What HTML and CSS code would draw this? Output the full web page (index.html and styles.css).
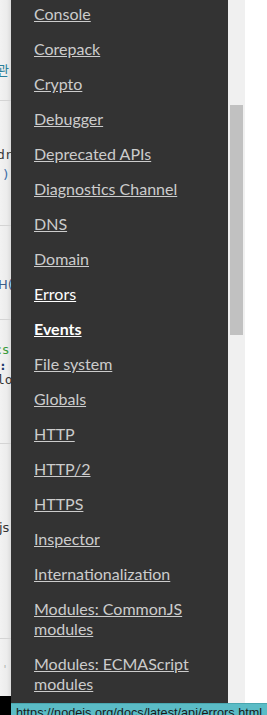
FILE: index.html
```html
<!DOCTYPE html>
<html lang="en">
<head>
<meta charset="utf-8">
<title>Node.js Docs</title>
<link rel="stylesheet" href="styles.css">
</head>
<body>
<div class="frame">
  <div class="page">
    <div class="sec s1"><span class="frag t1">관</span></div>
    <div class="sec s2"><span class="frag t2">dr</span><span class="frag t3">)</span></div>
    <div class="sec s3"><span class="frag t4">H(</span></div>
    <div class="sec s4"><span class="frag t5">cs</span><span class="frag t6">:</span><span class="frag t7">lo</span></div>
    <div class="sec s5"><span class="frag t8">js</span></div>
    <div class="sec s6"><span class="frag t9">'</span></div>
    <div class="sec s7"></div>
  </div>
  <nav class="sidebar">
    <ul class="nav">
      <li><a href="#">Console</a></li>
      <li><a href="#">Corepack</a></li>
      <li><a href="#">Crypto</a></li>
      <li><a href="#">Debugger</a></li>
      <li><a href="#">Deprecated APIs</a></li>
      <li><a href="#">Diagnostics Channel</a></li>
      <li><a href="#">DNS</a></li>
      <li><a href="#">Domain</a></li>
      <li><a href="#" class="hover">Errors</a></li>
      <li><a href="#" class="active">Events</a></li>
      <li><a href="#">File system</a></li>
      <li><a href="#">Globals</a></li>
      <li><a href="#">HTTP</a></li>
      <li><a href="#">HTTP/2</a></li>
      <li><a href="#">HTTPS</a></li>
      <li><a href="#">Inspector</a></li>
      <li><a href="#">Internationalization</a></li>
      <li><a href="#">Modules: CommonJS modules</a></li>
      <li><a href="#">Modules: ECMAScript modules</a></li>
      <li><a href="#">Modules: node:module API</a></li>
    </ul>
  </nav>
  <div class="scrollbar"><div class="thumb"></div></div>
  <div class="blank"></div>
</div>
<div class="status"><span class="corner"></span><span class="url">https://nodejs.org/docs/latest/api/errors.html</span></div>
</body>
</html>
```
FILE: styles.css
```css
html, body {
  margin: 0;
  padding: 0;
  height: 715px;
  overflow: hidden;
  background: #fff;
}
.frame {
  display: flex;
  height: 715px;
}
.page {
  width: 11px;
  flex: none;
  display: flex;
  flex-direction: column;
  overflow: hidden;
  background: linear-gradient(to right, #f2f2f2 0, #ececec 7px, #dcdcdc 11px);
  font-family: "DejaVu Sans Mono", monospace;
  font-size: 13px;
  color: #333;
}
.sec {
  position: relative;
  border-bottom: 1px solid #d4d4d4;
  flex: none;
}
.s1 { height: 100px; }
.s2 { height: 124px; }
.s3 { height: 93px; }
.s4 { height: 123px; }
.s5 { height: 194px; }
.s6 { height: 57px; border-bottom: none; }
.s7 { flex: 1; background: #000; border: none; }
.frag {
  position: absolute;
  white-space: nowrap;
  line-height: 14px;
}
.t1 { top: 63px; left: -3px; color: #2a7f9a; font-family: "Noto Sans CJK KR", sans-serif; font-size: 13px; }
.t2 { top: 47px; left: -3px; color: #3a3a3a; }
.t3 { top: 67px; left: 2px; color: #3d6fa8; }
.t4 { top: 52px; left: -2px; color: #3d5f8a; font-family: "DejaVu Sans", sans-serif; }
.t5 { top: 23px; left: -6px; color: #3a9b3a; }
.t6 { top: 39px; left: -1px; color: #1f3c6e; font-weight: bold; }
.t7 { top: 53px; left: -3px; color: #333; }
.t8 { top: 77px; left: -1px; color: #333; font-family: "DejaVu Sans", sans-serif; }
.t9 { top: 24px; left: 2px; color: #aaa; font-size: 10px; }
.sidebar {
  width: 217px;
  flex: none;
  background: #333;
  overflow: hidden;
}
.nav {
  list-style: none;
  margin: 0;
  padding: 4px 20px 0 23px;
  font-family: Lato, "Open Sans", sans-serif;
  font-size: 16px;
  line-height: 20px;
}
.nav li {
  margin-bottom: 15px;
}
.nav a {
  color: #ccc;
  text-decoration: underline;
}
.nav a.hover {
  color: #fff;
}
.nav a.active {
  color: #fff;
  font-weight: bold;
}
.scrollbar {
  width: 17px;
  flex: none;
  background: #f0f0f0;
  padding: 105px 2px 0 2px;
  box-sizing: border-box;
}
.thumb {
  height: 230px;
  background: #c1c1c1;
}
.blank {
  flex: 1;
  background: #fff;
}
.status {
  position: absolute;
  left: 0;
  right: 0;
  top: 703px;
  height: 20px;
  display: flex;
}
.corner {
  width: 11px;
  flex: none;
  background: #000;
}
.url {
  flex: 1;
  background: #5bbcc6;
  border-top: 1px solid #49a7b0;
  padding: 2px 0 0 5px;
  font-family: "Liberation Sans", Arial, sans-serif;
  font-size: 12.7px;
  color: #1a1a1a;
  white-space: nowrap;
  overflow: hidden;
}
```
